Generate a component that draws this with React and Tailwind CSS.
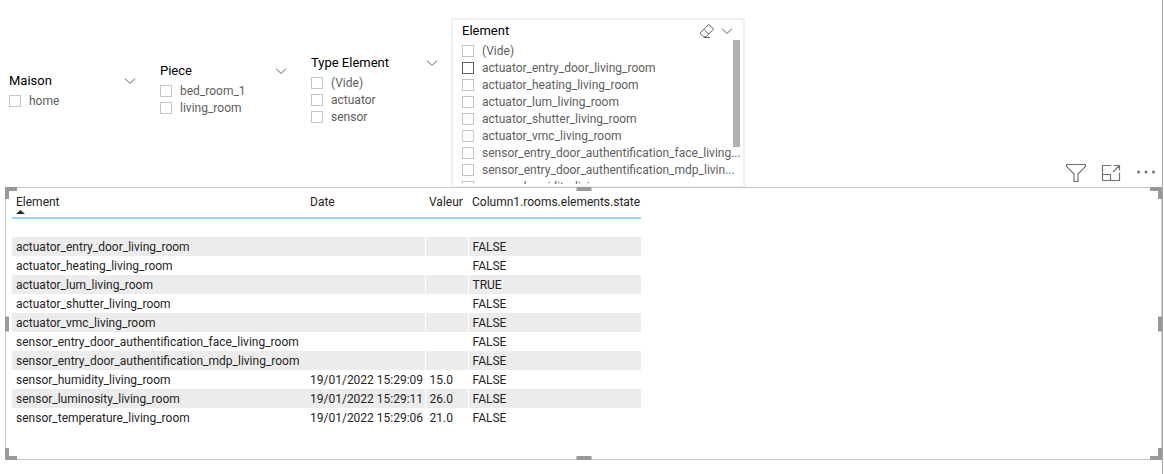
import React from "react";

const ELEMENTS = [
  "(Vide)",
  "actuator_entry_door_living_room",
  "actuator_heating_living_room",
  "actuator_lum_living_room",
  "actuator_shutter_living_room",
  "actuator_vmc_living_room",
  "sensor_entry_door_authentification_face_living...",
  "sensor_entry_door_authentification_mdp_livin...",
  "sensor_humidity_living_room",
];

const ROWS = [
  ["", "", "", ""],
  ["actuator_entry_door_living_room", "", "", "FALSE"],
  ["actuator_heating_living_room", "", "", "FALSE"],
  ["actuator_lum_living_room", "", "", "TRUE"],
  ["actuator_shutter_living_room", "", "", "FALSE"],
  ["actuator_vmc_living_room", "", "", "FALSE"],
  ["sensor_entry_door_authentification_face_living_room", "", "", "FALSE"],
  ["sensor_entry_door_authentification_mdp_living_room", "", "", "FALSE"],
  ["sensor_humidity_living_room", "19/01/2022 15:29:09", "15.0", "FALSE"],
  ["sensor_luminosity_living_room", "19/01/2022 15:29:11", "26.0", "FALSE"],
  ["sensor_temperature_living_room", "19/01/2022 15:29:06", "21.0", "FALSE"],
];

function Chevron() {
  return (
    <svg width="12" height="8" viewBox="0 0 12 8" fill="none" stroke="#605e5c" strokeWidth="1">
      <path d="M1 1.5 6 6.5 11 1.5" />
    </svg>
  );
}

function Eraser() {
  return (
    <svg width="16" height="16" viewBox="0 0 16 16" fill="none" stroke="#605e5c" strokeWidth="1">
      <path d="M9.8 1.3 14.7 6.2 6.8 13.8H4.6L1 10.2ZM4.8 6.3 9.7 11.2M4.6 14.5H11" />
    </svg>
  );
}

function Slicer({ title, items, clearable = false, highlighted }) {
  return (
    <fieldset className="flex min-h-0 min-w-0 flex-1 flex-col">
      <div className={"flex h-5 shrink-0 items-center justify-between " + (clearable ? "pr-[9px]" : "")}>
        <h2 className="text-[13px] leading-5 font-normal text-black">{title}</h2>
        <div className="flex items-center gap-1.5">
          {clearable && (
            <button type="button" aria-label="Clear selections">
              <Eraser />
            </button>
          )}
          <button type="button" aria-label={"Options " + title} className="flex">
            <Chevron />
          </button>
        </div>
      </div>
      <div className="min-h-0 flex-1 overflow-hidden pt-px">
        {items.map((item) => (
          <label key={item} className="flex h-[17px] items-center gap-2 text-[#605e5c]">
            <input
              type="checkbox"
              className={
                "size-3 shrink-0 appearance-none border bg-white " +
                (item === highlighted ? "border-[#605e5c]" : "border-[#c8c6c4]")
              }
            />
            <span className="whitespace-nowrap">{item}</span>
          </label>
        ))}
      </div>
    </fieldset>
  );
}

function Handles() {
  const corner = "absolute size-3 border-[#999]";
  return (
    <div aria-hidden="true" className="pointer-events-none">
      <span className={corner + " -top-px -left-px border-t-4 border-l-4"} />
      <span className={corner + " -top-px -right-px border-t-4 border-r-4"} />
      <span className={corner + " -bottom-px -left-px border-b-4 border-l-4"} />
      <span className={corner + " -right-px -bottom-px border-r-4 border-b-4"} />
      <span className="absolute -top-px left-1/2 h-1 w-[15px] -translate-x-1/2 bg-[#999]" />
      <span className="absolute -bottom-px left-1/2 h-1 w-[15px] -translate-x-1/2 bg-[#999]" />
      <span className="absolute top-1/2 -left-px h-[15px] w-1 -translate-y-1/2 bg-[#999]" />
      <span className="absolute top-1/2 -right-px h-[15px] w-1 -translate-y-1/2 bg-[#999]" />
    </div>
  );
}

export default function App() {
  return (
    <div className="min-h-screen bg-white pr-px font-[family-name:Roboto,sans-serif] text-[12px] leading-4 text-[#252423]">
      <main className="flex min-h-screen flex-col border-r border-[#a6a6a6]">
        <div className="flex h-[187px] items-start pt-[18px] pl-[9px]">
          <div className="flex gap-6">
            <div className="flex w-[127px] pt-[53px]">
              <Slicer title="Maison" items={["home"]} />
            </div>
            <div className="flex w-[127px] pt-[43px]">
              <Slicer title="Piece" items={["bed_room_1", "living_room"]} />
            </div>
            <div className="flex w-[127px] pt-[35px]">
              <Slicer title="Type Element" items={["(Vide)", "actuator", "sensor"]} />
            </div>
          </div>
          <div className="relative ml-[13px] flex h-[169px] w-[294px] border-2 border-b border-[#f0f0f0] pt-px pr-px pb-0.5 pl-[9px]">
            <div className="flex min-w-0 flex-1">
              <Slicer title="Element" items={ELEMENTS} clearable highlighted="actuator_entry_door_living_room" />
            </div>
            <span className="absolute top-5 right-[3px] h-[107px] w-[7px] bg-[#b3b0ad]" />
          </div>
          <div className="mr-[5px] ml-auto flex items-center gap-3.5 self-end pb-1 text-[#74726f]">
            <button type="button" aria-label="Filters">
              <svg width="22" height="20" viewBox="0 0 22 20" fill="none" stroke="currentColor" strokeWidth="1.2">
                <path d="M1.5 1.5h19v1.8L13 11v7.5H9V11L1.5 3.3Z" />
              </svg>
            </button>
            <button type="button" aria-label="Focus mode">
              <svg width="20" height="18" viewBox="0 0 20 18" fill="none" stroke="currentColor" strokeWidth="1.2">
                <path d="M10 1.5H1.5v15h17V8.5M13 1.5h5.5v5M18.5 1.5 12 8M1.5 10.5h8v6" />
              </svg>
            </button>
            <button type="button" aria-label="More options">
              <svg width="22" height="18" viewBox="0 0 22 18" fill="currentColor">
                <circle cx="3.5" cy="8" r="1.5" />
                <circle cx="11" cy="8" r="1.5" />
                <circle cx="18.5" cy="8" r="1.5" />
              </svg>
            </button>
          </div>
        </div>

        <section className="relative ml-[5px] min-h-[273px] border border-[#c8c8c8] pl-1.5">
          <table className="w-[629px] table-fixed border-collapse text-left">
            <colgroup>
              <col className="w-[294px]" />
              <col className="w-[119px]" />
              <col className="w-[43px]" />
              <col />
            </colgroup>
            <thead>
              <tr className="h-[30px] border-b-2 border-[#a0d1ff]">
                {["Element", "Date", "Valeur", "Column1.rooms.elements.state"].map((name, i) => (
                  <th
                    key={name}
                    scope="col"
                    aria-sort={i === 0 ? "ascending" : undefined}
                    className="px-1 pt-1.5 align-top font-normal whitespace-nowrap"
                  >
                    {name}
                    {i === 0 && (
                      <svg width="9" height="4" viewBox="0 0 9 4" className="block" fill="#252423">
                        <path d="M0 4 4.5 0 9 4Z" />
                      </svg>
                    )}
                  </th>
                ))}
              </tr>
            </thead>
            <tbody>
              {ROWS.map((row) => (
                <tr key={row[0]} className="h-[19px] even:bg-[#ececec]">
                  {row.map((cell, i) => (
                    <td
                      key={i}
                      className={
                        "px-1 py-0 whitespace-nowrap " + (i > 1 ? "border-l border-white" : "")
                      }
                    >
                      {cell}
                    </td>
                  ))}
                </tr>
              ))}
            </tbody>
          </table>
          <Handles />
        </section>
      </main>
    </div>
  );
}
